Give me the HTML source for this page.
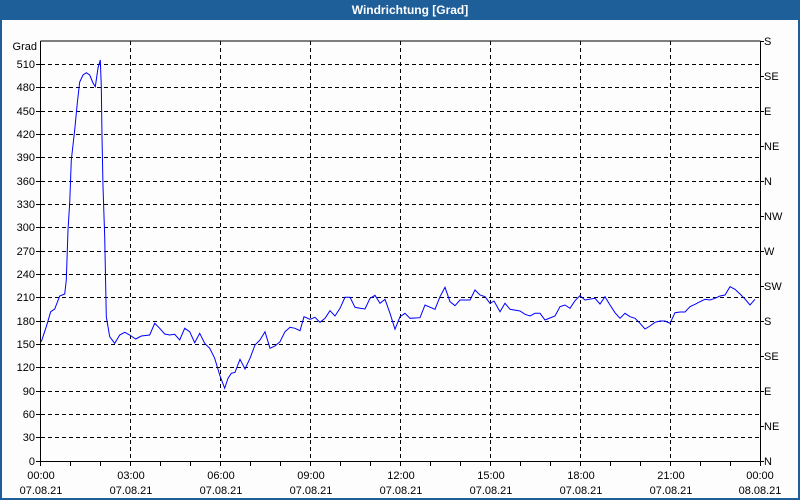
<!DOCTYPE html>
<html><head><meta charset="utf-8"><style>
html,body{margin:0;padding:0;}
body{width:800px;height:500px;overflow:hidden;background:#fdfdfd;font-family:"Liberation Sans",sans-serif;}
</style></head><body>
<svg width="800" height="500" viewBox="0 0 800 500" xmlns="http://www.w3.org/2000/svg" style="display:block">
<rect x="0" y="0" width="800" height="500" fill="#fdfdfd"/>
<rect x="0" y="0" width="800" height="20" fill="#1e5f9a"/>
<rect x="0" y="0" width="2" height="500" fill="#1e5f9a"/>
<rect x="798" y="0" width="2" height="500" fill="#1e5f9a"/>
<rect x="0" y="498" width="800" height="2" fill="#1e5f9a"/>
<text x="410" y="14" font-size="12" font-weight="bold" fill="#fff" text-anchor="middle">Windrichtung [Grad]</text>
<g stroke="#000" stroke-width="1" stroke-dasharray="4,3" fill="none">
<path d="M41 64.5H760M41 87.5H760M41 111.5H760M41 134.5H760M41 157.5H760M41 181.5H760M41 204.5H760M41 227.5H760M41 251.5H760M41 274.5H760M41 297.5H760M41 321.5H760M41 344.5H760M41 367.5H760M41 391.5H760M41 414.5H760M41 437.5H760"/>
<path d="M130.5 41V461M220.5 41V461M310.5 41V461M400.5 41V461M490.5 41V461M580.5 41V461M670.5 41V461"/>
</g>
<g stroke="#000" stroke-width="1" fill="none">
<path d="M40.5 41V461.5H760.5V41M40.5 41H760.5"/>
<path d="M36 64.5H40M36 87.5H40M36 111.5H40M36 134.5H40M36 157.5H40M36 181.5H40M36 204.5H40M36 227.5H40M36 251.5H40M36 274.5H40M36 297.5H40M36 321.5H40M36 344.5H40M36 367.5H40M36 391.5H40M36 414.5H40M36 437.5H40M36 461.5H40"/>
<path d="M760 41.5H764M760 76.5H764M760 111.5H764M760 146.5H764M760 181.5H764M760 216.5H764M760 251.5H764M760 286.5H764M760 321.5H764M760 356.5H764M760 391.5H764M760 426.5H764M760 461.5H764"/>
<path d="M40.5 461V466M70.5 461V466M100.5 461V466M130.5 461V466M160.5 461V466M190.5 461V466M220.5 461V466M250.5 461V466M280.5 461V466M310.5 461V466M340.5 461V466M370.5 461V466M400.5 461V466M430.5 461V466M460.5 461V466M490.5 461V466M520.5 461V466M550.5 461V466M580.5 461V466M610.5 461V466M640.5 461V466M670.5 461V466M700.5 461V466M730.5 461V466M760.5 461V466"/>
</g>
<g font-size="11" fill="#000" text-anchor="end">
<text x="37" y="50">Grad</text>
<text x="35" y="68">510</text><text x="35" y="91">480</text><text x="35" y="115">450</text><text x="35" y="138">420</text><text x="35" y="161">390</text><text x="35" y="185">360</text><text x="35" y="208">330</text><text x="35" y="231">300</text><text x="35" y="255">270</text><text x="35" y="278">240</text><text x="35" y="301">210</text><text x="35" y="325">180</text><text x="35" y="348">150</text><text x="35" y="371">120</text><text x="35" y="395">90</text><text x="35" y="418">60</text><text x="35" y="441">30</text><text x="35" y="465">0</text>
</g>
<g font-size="11" fill="#000">
<text x="764" y="45">S</text><text x="764" y="80">SE</text><text x="764" y="115">E</text><text x="764" y="150">NE</text><text x="764" y="185">N</text><text x="764" y="220">NW</text><text x="764" y="255">W</text><text x="764" y="290">SW</text><text x="764" y="325">S</text><text x="764" y="360">SE</text><text x="764" y="395">E</text><text x="764" y="430">NE</text><text x="764" y="465">N</text>
</g>
<g font-size="11" fill="#000" text-anchor="middle">
<text x="41" y="479">00:00</text><text x="41" y="494">07.08.21</text>
<text x="131" y="479">03:00</text><text x="131" y="494">07.08.21</text>
<text x="221" y="479">06:00</text><text x="221" y="494">07.08.21</text>
<text x="311" y="479">09:00</text><text x="311" y="494">07.08.21</text>
<text x="401" y="479">12:00</text><text x="401" y="494">07.08.21</text>
<text x="491" y="479">15:00</text><text x="491" y="494">07.08.21</text>
<text x="581" y="479">18:00</text><text x="581" y="494">07.08.21</text>
<text x="671" y="479">21:00</text><text x="671" y="494">07.08.21</text>
<text x="760" y="479">00:00</text><text x="760" y="494">08.08.21</text>
</g>
<polyline fill="none" stroke="#0000ff" stroke-width="1" points="41.3,341.7 46.3,326.7 50.7,311.7 54.7,309 59.7,296 64.7,294 66.3,280 68,230 69.7,203 71.3,160 74.7,130 77.3,103 79.7,82 83,75 86.3,72.7 89.7,75 93,83 95.3,86.7 98,68 100.3,60 101.3,86.7 102,136.7 103,186.7 104.7,236.7 106.3,316.7 109.7,336.7 114.7,343.3 119.7,335 124.7,332.3 129.7,335 135.7,339 141.3,336 149.7,335 154.7,323.3 159.7,328.3 164.7,334 169.7,335 174.7,334.3 179.7,340 184.7,328.3 189.7,331.7 194.7,342.7 199.7,333.3 204.7,343.3 209.7,348.3 214.7,358.3 219.7,375 224.7,388.3 228,378.3 231.3,373.3 235,372.3 240,359.3 245,369 250,358.3 255,345 260,340 265,331.7 270,348.3 275,346 280,341.7 285,331.7 290,327.3 295,328.3 300,330.7 304,316.7 310,319.3 315,317.3 320,322.3 325,318.3 330,310.7 335,316 340,308.3 345,297.3 350,297.3 355,307.3 360,308.3 365,309 370,298.3 375,295.3 380,303.3 385,299.3 390,313.3 395,329.3 400,316.7 405,313.3 410,318.3 420,317.7 425,305 435,309.3 440,296.7 445,287.3 450,301.7 455,305.7 460,300 470,300 475,290 480,295 485,296.7 490,303.3 494,301 500,311.7 505,303.3 510,309.3 520,311 525,314.3 530,316 535,313.3 540,313.3 545,320 555,316 560,306.7 565,305 570,308.3 575,300.7 580,295.7 585,300 595,298.3 600,304 605,296.7 610,305 615,312.7 620,318.3 625,313.3 630,316.7 635,318.3 640,323.3 645,329 650,326 655,322.3 660,321 665,321 670,323.3 675,312.7 680,312 685,312 690,306.7 695,304.3 700,301.7 705,299.3 710,300 715,298.3 720,296 725,295 730,286.7 735,289.3 740,294 745,299 750,305 755,299.3"/>
</svg>
</body></html>
